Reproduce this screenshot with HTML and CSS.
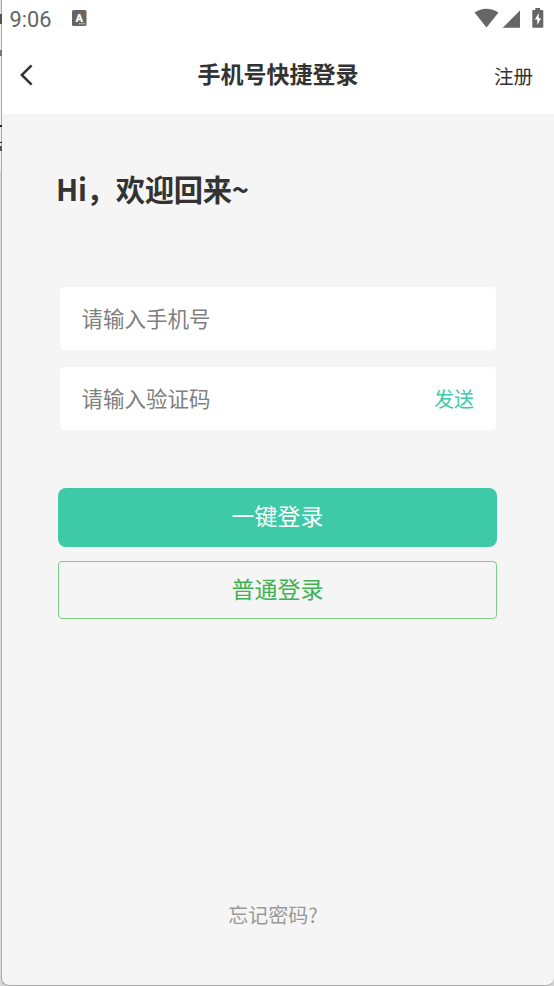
FILE: index.html
```html
<!DOCTYPE html>
<html lang="zh-CN">
<head>
<meta charset="utf-8">
<title>手机号快捷登录</title>
<link rel="stylesheet" href="styles.css">
</head>
<body>
<div class="backdrop"><i class="speck speck-a"></i><i class="speck speck-b"></i><i class="speck speck-c"></i><i class="speck speck-d"></i><i class="speck speck-e"></i></div>
<div class="phone">
  <div class="status">
    <span class="time">9:06</span>
    <svg class="badge-icon" width="15" height="16" viewBox="0 0 15 16"><rect width="14.5" height="16" rx="1.6" fill="#666"/><text class="badge-letter" x="7.2" y="11.6" text-anchor="middle">A</text><path d="M7.2 13.8h1.2m1 0h1.2m1 0h1.2" stroke="#fff" stroke-width="1.1"/></svg>
    <svg class="system-icons" width="70" height="20" viewBox="0 0 70 20"><path d="M.5 4.6C7.5-.6 17.5-.6 24.5 4.6L12.5 19.4Z" fill="#666"/><path d="M28.7 19.7 46 2.4v17.3Z" fill="#666"/><path d="M61.3 0h4.8v2h2.2q1 0 1 1v15.7q0 1-1 1h-9q-1 0-1-1V3q0-1 1-1h2Z" fill="#666"/><path d="M64.7 5 60.8 11.6h2.5V17l3.7-6.8h-2.3Z" fill="#fff"/></svg>
  </div>
  <header class="navbar">
    <svg class="back" width="14" height="22" viewBox="0 0 14 22"><path d="M12.6 1.3 2.8 11l9.8 9.7" fill="none" stroke="#333" stroke-width="2.5"/></svg>
    <h1 class="title">手机号快捷登录</h1>
    <a class="register">注册</a>
  </header>
  <main class="content">
    <h2 class="welcome">Hi，欢迎回来~</h2>
    <form class="fields">
      <div class="field"><span class="hint">请输入手机号</span></div>
      <div class="field"><span class="hint">请输入验证码</span><a class="send">发送</a></div>
    </form>
    <div class="button primary">一键登录</div>
    <div class="button outline">普通登录</div>
    <a class="forgot">忘记密码?</a>
  </main>
</div>
</body>
</html>
```
FILE: styles.css
```css
* { box-sizing: border-box; }
body {
  margin: 0;
  height: 986px;
  display: flex;
  overflow: hidden;
  background: #d2d2d2;
  color: #333;
  font-family: "Noto Sans CJK SC", sans-serif;
}
.backdrop {
  position: relative;
  flex: none;
  width: 1px;
  background: linear-gradient(#e0e0e0 0 24px, #f2f2f2 24px 171px, #dadada 171px);
}
.speck { position: absolute; left: 0; width: 2px; height: 1px; background: #222; }
.speck-a { top: 14px; height: 10px; background: #555; }
.speck-b { top: 50px; height: 6px; background: #777; }
.speck-c { top: 125px; height: 2px; }
.speck-d { top: 142px; }
.speck-e { top: 146px; height: 5px; background: #555; }
.phone {
  flex: 1;
  display: flex;
  flex-direction: column;
  height: 986px;
  border: solid #aaa;
  border-width: 0 0 1px 1px;
  border-radius: 0 0 8px 8px;
  background: #f5f5f5;
  overflow: hidden;
}
.status {
  display: flex;
  align-items: flex-start;
  height: 38px;
  padding: 8px 10px 0 7.5px;
  background: #fff;
}
.time { width: 62.5px; color: #666; font: 21.8px/24px Roboto, sans-serif; }
.badge-icon { margin-top: 2px; }
.badge-letter { fill: #fff; font: 900 11px Roboto, sans-serif; }
.system-icons { margin-left: auto; }
.navbar {
  display: grid;
  grid-template-columns: 90px 1fr 90px;
  align-items: center;
  height: 76px;
  padding: 0 21px 2px 17px;
  background: #fff;
}
.title { margin: 0; padding: 0 0 5px 4px; text-align: center; font-size: 23px; line-height: 34px; font-weight: 700; }
.register { text-align: right; font-size: 19.5px; line-height: 30px; padding-top: 2px; }
.content { flex: 1; display: flex; flex-direction: column; padding: 52px 57px 0 56px; }
.welcome { margin: 0 0 0 -2px; font-size: 29.3px; line-height: 44px; font-weight: 700; letter-spacing: -.25px; }
.fields { display: grid; gap: 17px; margin: 77px 1px 58px 2px; }
.field {
  display: flex;
  align-items: center;
  justify-content: space-between;
  height: 63px;
  padding: 0 22px 0 21.5px;
  border-radius: 4px;
  background: #fff;
  box-shadow: 0 0 1px #e8e8e8;
}
.hint { font-size: 21.5px; line-height: 30px; padding-bottom: 2px; color: #808080; }
.send { font-size: 20px; color: #3ec9a7; }
.button { height: 59px; text-align: center; font-size: 23px; line-height: 55px; }
.primary { border-radius: 8px; background: #3ec9a7; color: #fff; }
.outline { height: 58px; margin-top: 14px; border: 1px solid #7dcc87; border-radius: 4px; line-height: 52px; color: #3fb252; }
.forgot { margin: auto 9px 55px 0; text-align: center; font-size: 20px; line-height: 30px; color: #999; }
```
